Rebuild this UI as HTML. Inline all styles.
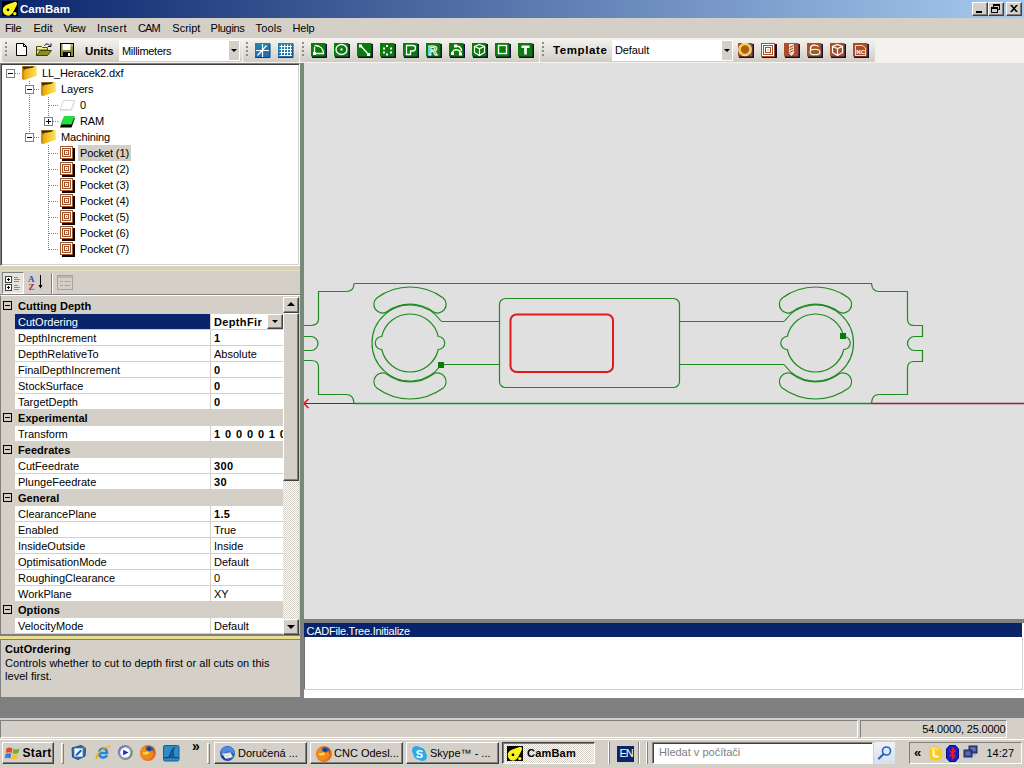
<!DOCTYPE html>
<html><head><meta charset="utf-8"><title>CamBam</title>
<style>
*{box-sizing:border-box;margin:0;padding:0}
html,body{width:1024px;height:768px;overflow:hidden;background:#d4d0c8;font-family:"Liberation Sans",sans-serif;font-size:11px;color:#000}
.a{position:absolute}
.t{position:absolute;white-space:nowrap;line-height:13px}
#title{left:0;top:0;width:1024px;height:18px;background:linear-gradient(90deg,#0a246a 0%,#a6caf0 100%)}
#title .cap{left:20px;top:2px;color:#fff;font-weight:bold;font-size:11.5px;line-height:14px}
.cbtn{position:absolute;top:2px;width:16px;height:14px;background:#d4d0c8;border:1px solid;border-color:#fff #404040 #404040 #fff;box-shadow:inset -1px -1px 0 #808080}
#menu{left:0;top:18px;width:1024px;height:20px;background:#d4d0c8}
#menu .t{top:4px;font-size:11px}
#tb{left:0;top:38px;width:1024px;height:25px;background:#f4f2ee}
.strip{position:absolute;top:0px;height:24px;background:linear-gradient(180deg,#f4f3ef 0%,#e4e1da 50%,#d0ccc2 100%);border-radius:2px}
.grip{position:absolute;top:4px;width:2px;height:14px;background:repeating-linear-gradient(180deg,#908e88 0 2px,transparent 2px 4px)}
.combo{position:absolute;background:#fff;height:21px;top:2px}
.combo .dd{position:absolute;right:1px;top:1px;width:10px;height:19px;background:#d4d0c8}
.combo .dd:after{content:"";position:absolute;left:2px;top:8px;border:3px solid transparent;border-top:3px solid #000;border-bottom:0}
.sep{position:absolute;top:4px;width:2px;height:18px;border-left:1px solid #a0a098;border-right:1px solid #fff}
.pm{width:9px;height:9px;border:1px solid #000;background:transparent}
.pm i{position:absolute;left:1px;top:3px;width:5px;height:1px;background:#000}
.pm b{position:absolute;left:3px;top:1px;width:1px;height:5px;background:#000}
.tpm{position:absolute;width:9px;height:9px;border:1px solid #808080;background:#fff}
.tpm i{position:absolute;left:1px;top:3px;width:5px;height:1px;background:#000}
.tpm b{position:absolute;left:3px;top:1px;width:1px;height:5px;background:#000}
.hd{position:absolute;height:1px;background:repeating-linear-gradient(90deg,#808080 0 1px,transparent 1px 2px)}
.vd{position:absolute;width:1px;background:repeating-linear-gradient(180deg,#808080 0 1px,transparent 1px 2px)}
.sbtn{position:absolute;width:16px;height:16px;background:#d4d0c8;border:1px solid;border-color:#fff #404040 #404040 #fff;box-shadow:inset -1px -1px 0 #808080,inset 1px 1px 0 #d4d0c8}
.tbtn{position:absolute;top:4px;height:22px;background:#d4d0c8;border:1px solid;border-color:#fff #404040 #404040 #fff;box-shadow:inset -1px -1px 0 #808080}
.tbtn .t{top:4px;font-size:11px}
</style></head><body>
<!-- TITLE BAR -->
<div id="title" class="a">
<svg class="a" style="left:2px;top:1px" width="16" height="16" viewBox="0 0 16 16"><rect width="16" height="15" fill="#000"/><path d="M0.800 9 C0.800 6 3 4.500 6 3.300 L12.500 0.900 C14.500 0.400 15.600 2 14.800 4 L11 11.500 C9.500 14 7 15 5 14.500 C2.500 14 0.800 12 0.800 9 Z" fill="#f8f420"/><circle cx="6" cy="8.800" r="1.400" fill="#000"/><circle cx="12.800" cy="12.600" r="1.700" fill="#f8f420"/></svg>
<div class="t cap">CamBam</div>
<div class="cbtn" style="left:972px"><div class="a" style="left:3px;top:8px;width:6px;height:2px;background:#000"></div></div>
<div class="cbtn" style="left:988px"><div class="a" style="left:4px;top:1px;width:7px;height:6px;border:1px solid #000;border-top-width:2px"></div><div class="a" style="left:2px;top:4px;width:7px;height:6px;border:1px solid #000;border-top-width:2px;background:#d4d0c8"></div></div>
<div class="cbtn" style="left:1006px"><svg class="a" style="left:3px;top:2px" width="8" height="7" viewBox="0 0 8 7"><path d="M0 0h2l2 2.3L6 0h2L5 3.5 8 7H6L4 4.7 2 7H0l3-3.5z" fill="#000"/></svg></div>
</div>
<!-- MENU -->
<div id="menu" class="a">
<div class="t" style="left:5px;letter-spacing:-0.4px">File</div><div class="t" style="left:33.5px;letter-spacing:0px">Edit</div><div class="t" style="left:63.5px;letter-spacing:-0.5px">View</div><div class="t" style="left:97px;letter-spacing:0.4px">Insert</div><div class="t" style="left:138px;letter-spacing:-0.9px">CAM</div><div class="t" style="left:172.3px;letter-spacing:0px">Script</div><div class="t" style="left:210.6px;letter-spacing:-0.3px">Plugins</div><div class="t" style="left:255.5px;letter-spacing:0.15px">Tools</div><div class="t" style="left:292.5px;letter-spacing:-0.2px">Help</div>
</div>
<!-- TOOLBAR -->
<div id="tb" class="a">
<div class="strip" style="left:2px;width:240px"></div>
<div class="strip" style="left:243px;width:56px"></div>
<div class="strip" style="left:300px;width:239px"></div>
<div class="strip" style="left:540px;width:335px"></div>
<div class="grip" style="left:5px"></div><div class="grip" style="left:246px"></div><div class="grip" style="left:302px"></div><div class="grip" style="left:542px"></div>
<div class="t" style="left:85px;top:7px;font-weight:bold;font-size:11.500px">Units</div>
<div class="combo" style="left:119px;width:121px"><div class="t" style="left:3px;top:5px;letter-spacing:-0.3px">Millimeters</div><div class="dd"></div></div>
<div class="t" style="left:553px;top:6px;font-weight:bold;font-size:11.500px;letter-spacing:0.6px">Template</div>
<div class="combo" style="left:612px;width:121px"><div class="t" style="left:3px;top:4px;letter-spacing:-0.1px">Default</div><div class="dd"></div></div>
<!--ICONS--><svg class="a" style="left:0;top:-1px" width="1024" height="26" viewBox="0 37 1024 26">
<path d="M16.500 43.500 H23.500 L26.500 46.500 V55.500 H16.500 Z" fill="#fff" stroke="#000"/><path d="M23.500 43.500 V46.500 H26.500" fill="none" stroke="#000"/>
<path d="M36.500 46.500 H41.500 L42.500 47.500 H47.500 V50 H36.500 Z" fill="#f4f088" stroke="#505010"/><path d="M36.500 50 V55.500 H47.500 L51.500 50.500 H40.500 L36.500 55.500" fill="#8c8c20" stroke="#404008"/><path d="M36.500 47 V55.500" stroke="#404008"/><path d="M44.500 45.500 C45.500 43.500 48.500 43.500 49.500 45.500" fill="none" stroke="#000"/><path d="M48 46.500 H51 V43.500" fill="none" stroke="#000"/>
<rect x="60.500" y="43.500" width="13" height="13" fill="#8c8c30" stroke="#000"/><rect x="62.500" y="44" width="8" height="6" fill="#fff"/><rect x="63" y="52" width="8" height="4.500" fill="#000"/><rect x="68" y="53" width="2" height="3" fill="#fff"/><rect x="71.500" y="44.500" width="1" height="2" fill="#fff"/>
<defs><linearGradient id="gb" x1="0" y1="0" x2="0" y2="1"><stop offset="0" stop-color="#1c8aa8"/><stop offset="1" stop-color="#2468b8"/></linearGradient></defs>
<rect x="255" y="43" width="15" height="15" fill="url(#gb)"/><path d="M255 57.500 H270 V43.500" stroke="#183c78" fill="none"/>
<path d="M262.500 44 V57 M256 50.500 H269 M257.500 55.500 L266.500 45.500" stroke="#fff" stroke-width="1.200"/>
<rect x="278" y="43" width="15" height="15" fill="url(#gb)"/><path d="M278 57.500 H293 V43.500" stroke="#183c78" fill="none"/>
<path d="M281.500 44.500 V55.500 M284.500 44.500 V55.500 M287.500 44.500 V55.500 M290.500 44.500 V55.500 M279.500 46.500 H292 M279.500 49.500 H292 M279.500 52.500 H292 M279.500 55.500 H292" stroke="#fff" stroke-width="1"/>
<rect x="312" y="44" width="15" height="14" fill="#10103c"/><rect x="311" y="43" width="14.500" height="13.500" fill="#0c7a0c"/><path d="M314.5 47 V53.5 H323.5 C323.5 48.5 320 45.5 314.5 45.5" stroke="#fff" fill="none" stroke-width="1.300"/><rect x="313" y="52" width="3" height="3" fill="#fff"/>
<rect x="335" y="44" width="15" height="14" fill="#10103c"/><rect x="334" y="43" width="14.500" height="13.500" fill="#0c7a0c"/><ellipse cx="341.5" cy="49.500" rx="5.500" ry="5" stroke="#fff" fill="none" stroke-width="1.300"/><rect x="340.5" y="48.500" width="2" height="2" fill="#fff"/>
<rect x="358" y="44" width="15" height="14" fill="#10103c"/><rect x="357" y="43" width="14.500" height="13.500" fill="#0c7a0c"/><path d="M360.5 45.500 L368.5 54.500" stroke="#fff" fill="none" stroke-width="1.400"/><rect x="359" y="44.500" width="3" height="3" fill="#fff"/><rect x="367" y="53" width="3" height="3" fill="#fff"/>
<rect x="381" y="44" width="15" height="14" fill="#10103c"/><rect x="380" y="43" width="14.500" height="13.500" fill="#0c7a0c"/><rect x="386" y="45" width="2" height="2" fill="#fff"/><rect x="383" y="47.5" width="2" height="2" fill="#fff"/><rect x="390" y="47.5" width="2" height="2" fill="#fff"/><rect x="383" y="51.5" width="2" height="2" fill="#fff"/><rect x="390" y="51.5" width="2" height="2" fill="#fff"/><rect x="386" y="53.5" width="2" height="2" fill="#fff"/>
<rect x="404" y="44" width="15" height="14" fill="#10103c"/><rect x="403" y="43" width="14.500" height="13.500" fill="#0c7a0c"/><path d="M406.5 45.500 H413 Q415.5 45.500 415.5 48 Q415.5 51 412.5 51 H410.5 V54.500 H406.5 Z" stroke="#fff" fill="none" stroke-width="1.300"/>
<rect x="427" y="44" width="15" height="14" fill="#10103c"/><rect x="426" y="43" width="14.500" height="13.500" fill="#0c7a0c"/><text x="428" y="55" font-family="Liberation Sans,sans-serif" font-weight="bold" font-size="13" fill="#0c7a0c" stroke="#fff" stroke-width="1">R</text>
<rect x="450" y="44" width="15" height="14" fill="#10103c"/><rect x="449" y="43" width="14.500" height="13.500" fill="#0c7a0c"/><path d="M452.5 53 C452.5 48.500 460.5 48.500 460.5 54 M455.5 46.500 C459 45.500 461.5 47.500 461.5 51" stroke="#fff" fill="none" stroke-width="1.500"/><rect x="451" y="52" width="3" height="3" fill="#fff"/><rect x="459" y="52.500" width="3" height="3" fill="#fff"/><rect x="454" y="44.500" width="3" height="3" fill="#fff"/>
<rect x="473" y="44" width="15" height="14" fill="#10103c"/><rect x="472" y="43" width="14.500" height="13.500" fill="#0c7a0c"/><path d="M479.5 44.500 L484.5 46.500 V52.500 L479.5 55.500 L474.5 52.500 V46.500 Z M474.5 46.500 L479.5 48.500 L484.5 46.500 M479.5 48.500 V55.500" stroke="#fff" fill="none" stroke-width="1.200"/>
<rect x="496" y="44" width="15" height="14" fill="#10103c"/><rect x="495" y="43" width="14.500" height="13.500" fill="#0c7a0c"/><rect x="498.5" y="45.500" width="8" height="8" stroke="#fff" fill="none" stroke-width="1.400"/>
<rect x="519" y="44" width="15" height="14" fill="#10103c"/><rect x="518" y="43" width="14.500" height="13.500" fill="#0c7a0c"/><path d="M521.5 45.500 H529.5 V48 H526.8 V54.500 H524.2 V48 H521.5 Z" fill="#fff"/>
<rect x="739" y="44" width="15" height="14" fill="#10103c"/><rect x="738" y="43" width="14.500" height="13.500" fill="#a8502c"/><circle cx="745" cy="49.500" r="5" fill="#b05a18" stroke="#f8e020" stroke-width="1.600"/><circle cx="745" cy="49.500" r="6.300" fill="none" stroke="#fff" stroke-width="0.900"/>
<rect x="762" y="44" width="15" height="14" fill="#10103c"/><rect x="761.5" y="43.500" width="13" height="13" fill="#fff" stroke="#a8502c"/><rect x="763.5" y="45.500" width="9" height="9" fill="#fff" stroke="#a8502c"/><rect x="765.5" y="47.500" width="5" height="5" fill="#fff" stroke="#a8502c"/><rect x="767.5" y="49.500" width="1" height="1" fill="#a8502c"/>
<rect x="785" y="44" width="15" height="14" fill="#10103c"/><rect x="784" y="43" width="14.500" height="13.500" fill="#a8502c"/><path d="M789.5 44.500 H793.5 V53 L791.5 55.500 L789.5 53 Z" fill="#e8d8c8" stroke="#fff" stroke-width="0.800"/><path d="M789.5 47.500 L793.5 45.500 M789.5 50 L793.5 48 M789.5 52.500 L793.5 50.500" stroke="#a8502c" stroke-width="1"/>
<rect x="808" y="44" width="15" height="14" fill="#10103c"/><rect x="807" y="43" width="14.500" height="13.500" fill="#a8502c"/><path d="M818.5 46.500 C816 44.500 811 44.500 810.5 48 C810 51 813 51.500 815 51" stroke="#fff" fill="none" stroke-width="1.300"/><ellipse cx="815" cy="52" rx="5" ry="2.800" fill="#8a6a20" stroke="#fff" stroke-width="1.100"/>
<rect x="831" y="44" width="15" height="14" fill="#10103c"/><rect x="830" y="43" width="14.500" height="13.500" fill="#a8502c"/><path d="M837.5 44.500 L842.5 46.500 V52.500 L837.5 55.500 L832.5 52.500 V46.500 Z M832.5 46.500 L837.5 48.500 L842.5 46.500 M837.5 48.500 V55.500" stroke="#fff" fill="none" stroke-width="1.200"/>
<rect x="854" y="44" width="15" height="14" fill="#10103c"/><rect x="853" y="43" width="14.500" height="13.500" fill="#a8502c"/><path d="M855.5 45.500 H862.5 L865.5 48 V55.500 H855.5 Z" fill="#a8502c" stroke="#f0d8c8" stroke-width="1"/><text x="856.3" y="54" font-family="Liberation Sans,sans-serif" font-weight="bold" font-size="6" fill="#fff">NC</text>
</svg>
<!--/ICONS-->
</div>
<!-- TREE -->
<div class="a" style="left:0;top:63px;width:300px;height:203px;background:#fff;border:1px solid;border-color:#808080 #fff #fff #808080;box-shadow:inset 1px 1px 0 #404040,inset -1px -1px 0 #d4d0c8"></div>
<div class="a" style="left:0;top:1px;letter-spacing:-0.12px">
<div class="hd" style="left:15px;top:72px;width:6px"></div>
<div class="vd" style="left:29px;top:80px;width:1px;height:52px"></div>
<div class="hd" style="left:34px;top:88px;width:6px"></div>
<div class="hd" style="left:34px;top:136px;width:6px"></div>
<div class="vd" style="left:48px;top:96px;height:20px"></div>
<div class="vd" style="left:48px;top:144px;height:105px"></div>
<div class="hd" style="left:49px;top:104px;width:10px"></div>
<div class="hd" style="left:53px;top:120px;width:6px"></div>
<div class="hd" style="left:49px;top:152px;width:10px"></div>
<div class="hd" style="left:49px;top:168px;width:10px"></div>
<div class="hd" style="left:49px;top:184px;width:10px"></div>
<div class="hd" style="left:49px;top:200px;width:10px"></div>
<div class="hd" style="left:49px;top:216px;width:10px"></div>
<div class="hd" style="left:49px;top:232px;width:10px"></div>
<div class="hd" style="left:49px;top:248px;width:10px"></div>
<div class="tpm" style="left:6px;top:68px"><i></i></div>
<div class="tpm" style="left:25px;top:84px"><i></i></div>
<div class="tpm" style="left:44px;top:116px"><i></i><b></b></div>
<div class="tpm" style="left:25px;top:132px"><i></i></div>
<svg class="a" style="left:21px;top:64px" width="17" height="16" viewBox="0 0 17 16"><defs><linearGradient id="fg" x1="0" y1="0" x2="1" y2="0"><stop offset="0" stop-color="#e09a10"/><stop offset="0.5" stop-color="#f6c628"/><stop offset="1" stop-color="#fbe060"/></linearGradient></defs><path d="M1 1.200 L15.500 1 L15.800 10.800 L2.800 15.300 L1 13.500 Z" fill="url(#fg)"/><path d="M1.300 1.400 L13.500 1.300 L11.500 2.800 L3.800 4 L2.600 6.500 Z" fill="#3a2808"/><path d="M1 1.200 L2.800 4.500 L2.800 15.300 L1 13.500 Z" fill="#c88a10"/></svg>
<div class="t" style="left:42px;top:66px">LL_Heracek2.dxf</div>
<svg class="a" style="left:40px;top:80px" width="17" height="16" viewBox="0 0 17 16"><defs><linearGradient id="fg" x1="0" y1="0" x2="1" y2="0"><stop offset="0" stop-color="#e09a10"/><stop offset="0.5" stop-color="#f6c628"/><stop offset="1" stop-color="#fbe060"/></linearGradient></defs><path d="M1 1.200 L15.500 1 L15.800 10.800 L2.800 15.300 L1 13.500 Z" fill="url(#fg)"/><path d="M1.300 1.400 L13.500 1.300 L11.500 2.800 L3.800 4 L2.600 6.500 Z" fill="#3a2808"/><path d="M1 1.200 L2.800 4.500 L2.800 15.300 L1 13.500 Z" fill="#c88a10"/></svg>
<div class="t" style="left:61px;top:82px">Layers</div>
<svg class="a" style="left:59px;top:98px" width="17" height="13" viewBox="0 0 17 13"><path d="M4.5 1.5 L15.5 1.5 L12 10.5 L1 10.5 Z" fill="#fff" stroke="#d8d8d8"/><path d="M1 11.5 L12.5 11.5 L16 2.5" stroke="#e4e4e4" fill="none"/></svg>
<div class="t" style="left:80px;top:98px">0</div>
<svg class="a" style="left:59px;top:114px" width="17" height="14" viewBox="0 0 17 14"><path d="M1 12.5 L4.5 3 L16 3 L12.5 12.5 Z" fill="#000"/><path d="M5 1 L16 1 L12.5 9.5 L1.5 9.5 Z" fill="#22e03c"/></svg>
<div class="t" style="left:80px;top:114px">RAM</div>
<svg class="a" style="left:40px;top:128px" width="17" height="16" viewBox="0 0 17 16"><defs><linearGradient id="fg" x1="0" y1="0" x2="1" y2="0"><stop offset="0" stop-color="#e09a10"/><stop offset="0.5" stop-color="#f6c628"/><stop offset="1" stop-color="#fbe060"/></linearGradient></defs><path d="M1 1.200 L15.500 1 L15.800 10.800 L2.800 15.300 L1 13.500 Z" fill="url(#fg)"/><path d="M1.300 1.400 L13.500 1.300 L11.500 2.800 L3.800 4 L2.600 6.500 Z" fill="#3a2808"/><path d="M1 1.200 L2.800 4.500 L2.800 15.300 L1 13.500 Z" fill="#c88a10"/></svg>
<div class="t" style="left:61px;top:130px">Machining</div>
<div class="a" style="left:78px;top:144px;width:53px;height:16px;background:#d4d0c8"></div>
<svg class="a" style="left:60px;top:145px" width="15" height="15" viewBox="0 0 15 15"><rect x="2" y="2" width="13" height="13" fill="#000"/><rect x="0.5" y="0.5" width="12" height="12" fill="#fff" stroke="#a0522d"/><rect x="2.5" y="2.5" width="8" height="8" fill="#fbe9d8" stroke="#a0522d"/><rect x="4.5" y="4.5" width="4" height="4" fill="#fff" stroke="#a0522d"/><rect x="6" y="6" width="1" height="1" fill="#a0522d"/></svg>
<div class="t" style="left:80px;top:146px">Pocket (1)</div>
<svg class="a" style="left:60px;top:161px" width="15" height="15" viewBox="0 0 15 15"><rect x="2" y="2" width="13" height="13" fill="#000"/><rect x="0.5" y="0.5" width="12" height="12" fill="#fff" stroke="#a0522d"/><rect x="2.5" y="2.5" width="8" height="8" fill="#fbe9d8" stroke="#a0522d"/><rect x="4.5" y="4.5" width="4" height="4" fill="#fff" stroke="#a0522d"/><rect x="6" y="6" width="1" height="1" fill="#a0522d"/></svg>
<div class="t" style="left:80px;top:162px">Pocket (2)</div>
<svg class="a" style="left:60px;top:177px" width="15" height="15" viewBox="0 0 15 15"><rect x="2" y="2" width="13" height="13" fill="#000"/><rect x="0.5" y="0.5" width="12" height="12" fill="#fff" stroke="#a0522d"/><rect x="2.5" y="2.5" width="8" height="8" fill="#fbe9d8" stroke="#a0522d"/><rect x="4.5" y="4.5" width="4" height="4" fill="#fff" stroke="#a0522d"/><rect x="6" y="6" width="1" height="1" fill="#a0522d"/></svg>
<div class="t" style="left:80px;top:178px">Pocket (3)</div>
<svg class="a" style="left:60px;top:193px" width="15" height="15" viewBox="0 0 15 15"><rect x="2" y="2" width="13" height="13" fill="#000"/><rect x="0.5" y="0.5" width="12" height="12" fill="#fff" stroke="#a0522d"/><rect x="2.5" y="2.5" width="8" height="8" fill="#fbe9d8" stroke="#a0522d"/><rect x="4.5" y="4.5" width="4" height="4" fill="#fff" stroke="#a0522d"/><rect x="6" y="6" width="1" height="1" fill="#a0522d"/></svg>
<div class="t" style="left:80px;top:194px">Pocket (4)</div>
<svg class="a" style="left:60px;top:209px" width="15" height="15" viewBox="0 0 15 15"><rect x="2" y="2" width="13" height="13" fill="#000"/><rect x="0.5" y="0.5" width="12" height="12" fill="#fff" stroke="#a0522d"/><rect x="2.5" y="2.5" width="8" height="8" fill="#fbe9d8" stroke="#a0522d"/><rect x="4.5" y="4.5" width="4" height="4" fill="#fff" stroke="#a0522d"/><rect x="6" y="6" width="1" height="1" fill="#a0522d"/></svg>
<div class="t" style="left:80px;top:210px">Pocket (5)</div>
<svg class="a" style="left:60px;top:225px" width="15" height="15" viewBox="0 0 15 15"><rect x="2" y="2" width="13" height="13" fill="#000"/><rect x="0.5" y="0.5" width="12" height="12" fill="#fff" stroke="#a0522d"/><rect x="2.5" y="2.5" width="8" height="8" fill="#fbe9d8" stroke="#a0522d"/><rect x="4.5" y="4.5" width="4" height="4" fill="#fff" stroke="#a0522d"/><rect x="6" y="6" width="1" height="1" fill="#a0522d"/></svg>
<div class="t" style="left:80px;top:226px">Pocket (6)</div>
<svg class="a" style="left:60px;top:241px" width="15" height="15" viewBox="0 0 15 15"><rect x="2" y="2" width="13" height="13" fill="#000"/><rect x="0.5" y="0.5" width="12" height="12" fill="#fff" stroke="#a0522d"/><rect x="2.5" y="2.5" width="8" height="8" fill="#fbe9d8" stroke="#a0522d"/><rect x="4.5" y="4.5" width="4" height="4" fill="#fff" stroke="#a0522d"/><rect x="6" y="6" width="1" height="1" fill="#a0522d"/></svg>
<div class="t" style="left:80px;top:242px">Pocket (7)</div>
</div>
<div class="a" style="left:0;top:270px;width:300px;height:1px;background:#e6e0b0"></div>
<div class="a" style="left:2px;top:272px;width:22px;height:22px;background:#e6e4de;border:1px solid;border-color:#808080 #fff #fff #808080"></div>
<svg class="a" style="left:5px;top:275px" width="16" height="16" viewBox="0 0 16 16"><g fill="#fff" stroke="#404040"><rect x="0.5" y="1.5" width="6" height="6"/><rect x="0.5" y="9.5" width="6" height="6"/></g><path d="M2 4.5h3M3.5 3v3M2 12.5h3M3.5 11v3" stroke="#000"/><path d="M9 2.5h4M9 4.5h6M9 6.5h5M9 10.5h4M9 12.5h6M9 14.5h5" stroke="#8088a0"/></svg>
<svg class="a" style="left:28px;top:274px" width="16" height="17" viewBox="0 0 16 17"><text x="0" y="7.5" font-family="Liberation Serif,serif" font-size="9" font-weight="bold" fill="#2a4ab8">A</text><text x="0.5" y="15.5" font-family="Liberation Serif,serif" font-size="9" font-weight="bold" fill="#b02838">Z</text><path d="M12.5 1v12" stroke="#000"/><path d="M10.5 11h4l-2 3.5z" fill="#000"/></svg>
<div class="a" style="left:51px;top:273px;width:2px;height:21px;border-left:1px solid #808080;border-right:1px solid #fff"></div>
<svg class="a" style="left:57px;top:275px" width="16" height="15" viewBox="0 0 16 15"><rect x="0.5" y="0.5" width="15" height="14" fill="#d4d0c8" stroke="#a8a49c"/><rect x="1" y="1" width="14" height="2" fill="#b8b4ac"/><path d="M3 6.5h3M3 10.5h3M7.500 6.500h6M7.500 10.500h6" stroke="#a8a49c"/><path d="M1.5 14.500h14v-13" stroke="#fff" fill="none" transform="translate(1,1)"/></svg>
<div class="a" style="left:0;top:294px;width:300px;height:1px;background:#808080"></div>
<div class="a" id="pg" style="left:0;top:295px;width:300px;height:340px;background:#d4d0c8;border-left:1px solid #808080;border-bottom:1px solid #808080;border-top:1px solid #fff"></div>
<div class="a" style="left:15px;top:297px;width:268px;height:337px;background:#fff"></div>
<div class="a" style="left:1px;top:297px;width:282px;height:17px;background:#d4d0c8"></div>
<div class="a pm" style="left:3px;top:301px"><i></i></div>
<div class="t" style="left:18px;top:300px;font-weight:bold;letter-spacing:0.05px">Cutting Depth</div>
<div class="a" style="left:15px;top:314px;width:195px;height:15px;background:#0a246a"></div>
<div class="t" style="left:18px;top:316px;color:#fff">CutOrdering</div>
<div class="t" style="left:214px;top:316px;font-weight:bold;letter-spacing:0.35px;width:52px;overflow:hidden">DepthFir</div>
<div class="a" style="left:15px;top:329px;width:268px;height:1px;background:#d4d0c8"></div>
<div class="a" style="left:210px;top:314px;width:1px;height:15px;background:#d4d0c8"></div>
<div class="t" style="left:18px;top:332px">DepthIncrement</div>
<div class="t" style="left:214px;top:332px;font-weight:bold;letter-spacing:0.35px;width:69px;overflow:hidden">1</div>
<div class="a" style="left:15px;top:345px;width:268px;height:1px;background:#d4d0c8"></div>
<div class="a" style="left:210px;top:330px;width:1px;height:15px;background:#d4d0c8"></div>
<div class="t" style="left:18px;top:348px">DepthRelativeTo</div>
<div class="t" style="left:214px;top:348px;width:69px;overflow:hidden">Absolute</div>
<div class="a" style="left:15px;top:361px;width:268px;height:1px;background:#d4d0c8"></div>
<div class="a" style="left:210px;top:346px;width:1px;height:15px;background:#d4d0c8"></div>
<div class="t" style="left:18px;top:364px">FinalDepthIncrement</div>
<div class="t" style="left:214px;top:364px;font-weight:bold;letter-spacing:0.35px;width:69px;overflow:hidden">0</div>
<div class="a" style="left:15px;top:377px;width:268px;height:1px;background:#d4d0c8"></div>
<div class="a" style="left:210px;top:362px;width:1px;height:15px;background:#d4d0c8"></div>
<div class="t" style="left:18px;top:380px">StockSurface</div>
<div class="t" style="left:214px;top:380px;font-weight:bold;letter-spacing:0.35px;width:69px;overflow:hidden">0</div>
<div class="a" style="left:15px;top:393px;width:268px;height:1px;background:#d4d0c8"></div>
<div class="a" style="left:210px;top:378px;width:1px;height:15px;background:#d4d0c8"></div>
<div class="t" style="left:18px;top:396px">TargetDepth</div>
<div class="t" style="left:214px;top:396px;font-weight:bold;letter-spacing:0.35px;width:69px;overflow:hidden">0</div>
<div class="a" style="left:15px;top:409px;width:268px;height:1px;background:#d4d0c8"></div>
<div class="a" style="left:210px;top:394px;width:1px;height:15px;background:#d4d0c8"></div>
<div class="a" style="left:1px;top:409px;width:282px;height:17px;background:#d4d0c8"></div>
<div class="a pm" style="left:3px;top:413px"><i></i></div>
<div class="t" style="left:18px;top:412px;font-weight:bold;letter-spacing:0.05px">Experimental</div>
<div class="t" style="left:18px;top:428px">Transform</div>
<div class="t" style="left:214px;top:428px;font-weight:bold;letter-spacing:0.9px;width:69px;overflow:hidden">1 0 0 0 0 1 0 0 0 0 1 0 0 0 0 1</div>
<div class="a" style="left:15px;top:441px;width:268px;height:1px;background:#d4d0c8"></div>
<div class="a" style="left:210px;top:426px;width:1px;height:15px;background:#d4d0c8"></div>
<div class="a" style="left:1px;top:441px;width:282px;height:17px;background:#d4d0c8"></div>
<div class="a pm" style="left:3px;top:445px"><i></i></div>
<div class="t" style="left:18px;top:444px;font-weight:bold;letter-spacing:0.05px">Feedrates</div>
<div class="t" style="left:18px;top:460px">CutFeedrate</div>
<div class="t" style="left:214px;top:460px;font-weight:bold;letter-spacing:0.35px;width:69px;overflow:hidden">300</div>
<div class="a" style="left:15px;top:473px;width:268px;height:1px;background:#d4d0c8"></div>
<div class="a" style="left:210px;top:458px;width:1px;height:15px;background:#d4d0c8"></div>
<div class="t" style="left:18px;top:476px">PlungeFeedrate</div>
<div class="t" style="left:214px;top:476px;font-weight:bold;letter-spacing:0.35px;width:69px;overflow:hidden">30</div>
<div class="a" style="left:15px;top:489px;width:268px;height:1px;background:#d4d0c8"></div>
<div class="a" style="left:210px;top:474px;width:1px;height:15px;background:#d4d0c8"></div>
<div class="a" style="left:1px;top:489px;width:282px;height:17px;background:#d4d0c8"></div>
<div class="a pm" style="left:3px;top:493px"><i></i></div>
<div class="t" style="left:18px;top:492px;font-weight:bold;letter-spacing:0.05px">General</div>
<div class="t" style="left:18px;top:508px">ClearancePlane</div>
<div class="t" style="left:214px;top:508px;font-weight:bold;letter-spacing:0.35px;width:69px;overflow:hidden">1.5</div>
<div class="a" style="left:15px;top:521px;width:268px;height:1px;background:#d4d0c8"></div>
<div class="a" style="left:210px;top:506px;width:1px;height:15px;background:#d4d0c8"></div>
<div class="t" style="left:18px;top:524px">Enabled</div>
<div class="t" style="left:214px;top:524px;width:69px;overflow:hidden">True</div>
<div class="a" style="left:15px;top:537px;width:268px;height:1px;background:#d4d0c8"></div>
<div class="a" style="left:210px;top:522px;width:1px;height:15px;background:#d4d0c8"></div>
<div class="t" style="left:18px;top:540px">InsideOutside</div>
<div class="t" style="left:214px;top:540px;width:69px;overflow:hidden">Inside</div>
<div class="a" style="left:15px;top:553px;width:268px;height:1px;background:#d4d0c8"></div>
<div class="a" style="left:210px;top:538px;width:1px;height:15px;background:#d4d0c8"></div>
<div class="t" style="left:18px;top:556px">OptimisationMode</div>
<div class="t" style="left:214px;top:556px;width:69px;overflow:hidden">Default</div>
<div class="a" style="left:15px;top:569px;width:268px;height:1px;background:#d4d0c8"></div>
<div class="a" style="left:210px;top:554px;width:1px;height:15px;background:#d4d0c8"></div>
<div class="t" style="left:18px;top:572px">RoughingClearance</div>
<div class="t" style="left:214px;top:572px;width:69px;overflow:hidden">0</div>
<div class="a" style="left:15px;top:585px;width:268px;height:1px;background:#d4d0c8"></div>
<div class="a" style="left:210px;top:570px;width:1px;height:15px;background:#d4d0c8"></div>
<div class="t" style="left:18px;top:588px">WorkPlane</div>
<div class="t" style="left:214px;top:588px;width:69px;overflow:hidden">XY</div>
<div class="a" style="left:15px;top:601px;width:268px;height:1px;background:#d4d0c8"></div>
<div class="a" style="left:210px;top:586px;width:1px;height:15px;background:#d4d0c8"></div>
<div class="a" style="left:1px;top:601px;width:282px;height:17px;background:#d4d0c8"></div>
<div class="a pm" style="left:3px;top:605px"><i></i></div>
<div class="t" style="left:18px;top:604px;font-weight:bold;letter-spacing:0.05px">Options</div>
<div class="t" style="left:18px;top:620px">VelocityMode</div>
<div class="t" style="left:214px;top:620px;width:69px;overflow:hidden">Default</div>
<div class="a" style="left:15px;top:633px;width:268px;height:1px;background:#d4d0c8"></div>
<div class="a" style="left:210px;top:618px;width:1px;height:15px;background:#d4d0c8"></div>
<!-- dropdown button in selected row -->
<div class="sbtn" style="left:267px;top:314px;height:15px"><div class="a" style="left:4px;top:5px;border:3px solid transparent;border-top:3px solid #000;border-bottom:0"></div></div>
<!-- scrollbar -->
<div class="a" style="left:283px;top:297px;width:16px;height:338px;background:repeating-conic-gradient(#fff 0 25%,#d4d0c8 0 50%) 0 0/2px 2px"></div>
<div class="sbtn" style="left:283px;top:297px"><div class="a" style="left:3px;top:4px;border:4px solid transparent;border-bottom:4px solid #000;border-top:0"></div></div>
<div class="sbtn" style="left:283px;top:313px;height:168px"></div>
<div class="sbtn" style="left:283px;top:619px"><div class="a" style="left:3px;top:5px;border:4px solid transparent;border-top:4px solid #000;border-bottom:0"></div></div>
<!-- description -->
<div class="a" style="left:0;top:635px;width:300px;height:1px;background:#808080"></div>
<div class="a" style="left:0;top:636px;width:300px;height:3px;background:#e8e090"></div>
<div class="a" style="left:0;top:639px;width:300px;height:58px;background:#d4d0c8;border:1px solid #808080;border-right:0;border-bottom:0"></div>
<div class="t" style="left:5px;top:643px;font-weight:bold;letter-spacing:0.1px">CutOrdering</div>
<div class="t" style="left:5px;top:657px;font-size:11px;line-height:13px;white-space:normal;width:285px;letter-spacing:0.04px">Controls whether to cut to depth first or all cuts on this level first.</div>
<!-- SPLITTER + CANVAS -->
<div class="a" style="left:300px;top:619px;width:4px;height:78px;background:#808080"></div>
<div class="a" style="left:300px;top:63px;width:4px;height:556px;background:#748c76"></div>
<svg class="a" style="left:304px;top:63px" width="720" height="556" viewBox="304 63 720 556">
<rect x="304" y="63" width="720" height="556" fill="#e0e0e0"/>
<g fill="none" stroke="#1f8a1f" stroke-width="1.2">
<!-- outline -->
<path d="M354 283.500 H871.500 Q872 291.500 879 291.500 H907.500 V319 Q907.500 325.500 914 325.500 H922.500 V336.500 H914.500 A7 7 0 0 0 914.500 350.500 H922.500 V361.500 H914 Q907.500 361.500 907.500 368 V394.500 H879 Q872 394.500 871.500 403 "/>
<path d="M354 283.500 Q354 291.500 346 291.500 H318.500 V319 Q318.500 325 311 325.500 H304"/>
<path d="M304 336.500 H311 A7 7 0 0 1 311 350.500 H304"/>
<path d="M304 360.500 H311 Q318.500 360.500 318.500 367 V394.500 H346 Q353.500 394.500 354 403"/>
<!-- center rect -->
<rect x="499.500" y="298.500" width="180" height="89" rx="6"/>
<!-- left circle -->
<path d="M441 321 A38 38 0 1 0 441 365"/>
<path d="M441 321.500 H499.500 M444 364.500 H499.500"/>
<path d="M381.74 336.5 A29 29 0 0 1 438.26 336.5 A6.5 6.5 0 0 1 438.26 349.5 A29 29 0 0 1 381.74 349.5 A6.5 6.5 0 0 1 381.74 336.5 Z"/>
<path d="M377.1 297.7 A56 56 0 0 1 442.9 297.7 A8.6 8.6 0 0 1 432.8 311.6 A38.8 38.8 0 0 0 387.2 311.6 A8.6 8.6 0 0 1 377.1 297.7 Z"/>
<path d="M377.1 388.3 A56 56 0 0 0 442.9 388.3 A8.6 8.6 0 0 0 432.8 374.4 A38.8 38.8 0 0 1 387.2 374.4 A8.6 8.6 0 0 0 377.1 388.3 Z"/>
<!-- right circle -->
<path d="M784.500 321 A38 38 0 1 1 784.500 365"/>
<path d="M787.24 336.5 A29 29 0 0 1 843.76 336.5 A6.5 6.5 0 0 1 843.76 349.5 A29 29 0 0 1 787.24 349.5 A6.5 6.5 0 0 1 787.24 336.5 Z"/>
<path d="M782.6 297.7 A56 56 0 0 1 848.4 297.7 A8.6 8.6 0 0 1 838.3 311.6 A38.8 38.8 0 0 0 792.7 311.6 A8.6 8.6 0 0 1 782.6 297.7 Z"/>
<path d="M782.6 388.3 A56 56 0 0 0 848.4 388.3 A8.6 8.6 0 0 0 838.3 374.4 A38.8 38.8 0 0 1 792.7 374.4 A8.6 8.6 0 0 0 782.6 388.3 Z"/>
<path d="M679.500 321.500 H784.500 M679.500 364.500 H784.500"/>
</g>
<path d="M304 403.500 H354" stroke="#8a1830" stroke-width="1.200"/>
<path d="M308.500 399 L304 403.500 L308.500 408" stroke="#e01828" stroke-width="1.600" fill="none"/>
<path d="M354 403.500 H872" stroke="#1f8a1f" stroke-width="1.4"/>
<path d="M872 403.500 H1024" stroke="#a01838" stroke-width="1.4"/>
<rect x="510.500" y="314.500" width="102.500" height="57.500" rx="6" fill="none" stroke="#e01818" stroke-width="2"/>
<rect x="438" y="362" width="6" height="6" fill="#0a7a0a"/>
<rect x="840" y="333" width="6" height="6" fill="#0a7a0a"/>
</svg>
<div class="a" style="left:304px;top:619px;width:720px;height:4px;background:#808080"></div>
<!-- LOG -->
<div id="log" class="a" style="left:304px;top:623px;width:720px;height:75px;background:#fff;z-index:2"></div>
<div class="a" style="left:304px;top:623px;width:718px;height:14px;background:#0a246a;z-index:3"></div>
<div class="t" style="left:306.500px;top:625px;color:#fff;letter-spacing:-0.24px;z-index:4">CADFile.Tree.Initialize</div>
<div class="a" style="left:304px;top:637px;width:1px;height:52px;background:#707070;z-index:3"></div>
<div class="a" style="left:304px;top:689px;width:719px;height:1px;background:#d0d0d0;z-index:3"></div>
<div class="a" style="left:1022px;top:637px;width:1px;height:53px;background:#d0d0d0;z-index:3"></div>
<div class="a" style="left:0;top:697px;width:1024px;height:21px;background:#808080"></div>
<!-- STATUS -->
<div id="status" class="a" style="left:0;top:718px;width:1024px;height:21px;background:#d4d0c8"></div>
<div class="a" style="left:0px;top:720px;width:858px;height:18px;border:1px solid;border-color:#808080 #fff #fff #808080"></div>
<div class="a" style="left:860px;top:720px;width:147px;height:18px;border:1px solid;border-color:#808080 #fff #fff #808080"></div>
<div class="t" style="left:859px;top:723px;width:146.500px;text-align:right;font-size:11px;letter-spacing:-0.15px">54.0000, 25.0000</div>
<!-- TASKBAR -->
<div id="taskbar" class="a" style="left:0;top:739px;width:1024px;height:29px;background:#d4d0c8;border-top:1px solid #fff"><div class="a" style="left:0;top:-2px">
<div class="tbtn" style="left:2px;width:52px"><svg class="a" style="left:2px;top:2px" width="16" height="16" viewBox="0 0 16 16"><path d="M1.500 3.500 C3.500 2 5.500 2.500 7.500 3.500 L6.500 8 C4.500 7 2.500 7 0.800 8 Z" fill="#e8452c"/><path d="M8.500 3.800 C10.500 5 12.500 4.500 14.500 3.500 L13.500 8 C11.500 9 9.500 9 7.500 8.200 Z" fill="#6cb52d"/><path d="M0.600 9 C2.500 8 4.500 8 6.300 9 L5.300 13.500 C3.500 12.500 1.500 12.500 -0.200 13.500 Z" fill="#3a7cd8"/><path d="M7.300 9.300 C9.300 10.200 11.300 10 13.300 9 L12.300 13.500 C10.300 14.500 8.300 14.500 6.300 13.700 Z" fill="#f6c12a"/></svg><div class="t" style="left:19.500px;top:3px;font-weight:bold;font-size:12px;line-height:14px;letter-spacing:0.35px">Start</div></div>
<div class="a" style="left:61px;top:5px;width:3px;height:21px;border-left:1px solid #fff;border-right:1px solid #808080;border-top:1px solid #fff;border-bottom:1px solid #808080"></div>
<div id="ql">
<svg class="a" style="left:70px;top:6px" width="17" height="17" viewBox="0 0 17 17"><path d="M2 4 L11 1.500 L15.500 4 L15 12 L8 15.500 L2.500 13 Z" fill="#2a6fb8" stroke="#1a4c8c"/><path d="M4.500 4.500 H12.500 V12.500 H4.500 Z" fill="#eef6ff" stroke="#9cc4ec"/><path d="M6 10 L10.500 5.500 L12 7 L7.500 11.500 L5.500 12 Z" fill="#3b5a82"/><path d="M13 3 L15.500 5" stroke="#c86428" stroke-width="1.500"/></svg>
<svg class="a" style="left:94px;top:6px" width="18" height="17" viewBox="0 0 18 17"><path d="M5.500 9 H13 C13 6 11.500 4.500 9.300 4.500 C7 4.500 5.300 6.300 5.300 9 C5.300 11.800 7 13.500 9.300 13.500 C11 13.500 12.300 12.800 12.900 11.300" fill="none" stroke="#2488dc" stroke-width="2.600"/><path d="M1.800 15 C0 12 5.500 5 15.800 1.300 C17 1.500 16.500 3.500 15 4.500 C15.500 3 14.500 2.800 13 3.500 C6.500 7 3 11.500 3.500 14.500 C3 15.500 2.300 15.500 1.800 15 Z" fill="#f0b020"/></svg>
<svg class="a" style="left:117px;top:6px" width="17" height="17" viewBox="0 0 17 17"><defs><linearGradient id="wm" x1="0" y1="0" x2="1" y2="1"><stop offset="0" stop-color="#5a64c8"/><stop offset=".5" stop-color="#8a98c0"/><stop offset="1" stop-color="#5c8a3c"/></linearGradient></defs><circle cx="8.300" cy="8.500" r="7.500" fill="url(#wm)"/><circle cx="8.300" cy="8.500" r="5.200" fill="#e8ecf8"/><circle cx="8.300" cy="8.500" r="4" fill="#fff"/><path d="M6.200 5.800 L11.600 8.500 L6.200 11.200 Z" fill="#1c2cb0"/></svg>
<svg class="a" style="left:139px;top:6px" width="18" height="18" viewBox="0 0 18 18"><circle cx="9" cy="9" r="8" fill="#e8701c"/><circle cx="10" cy="7" r="4.800" fill="#2a58a8"/><path d="M1.500 7 C3 3 6 2 8 2.500 C6 4 6.500 6 8.500 7 C10.500 8 12.500 7 13.500 6 C15 9 14 14 9 15.500 C4 16.500 0.500 12 1.500 7 Z" fill="#f08a1c"/><path d="M4 10 C6 11 9 10.500 10.500 9 L8.500 7 C7 8.500 5 8.500 3.500 8 Z" fill="#fbd44c"/><path d="M9.500 3 L11.500 4.500 L10.500 6.500 L9 5.500 Z" fill="#1a2a5c"/></svg>
<svg class="a" style="left:163px;top:7px" width="17" height="17" viewBox="0 0 17 17"><rect x="0.500" y="0.500" width="15.500" height="15.500" rx="1.500" fill="#2f8cc8" stroke="#1c5e94"/><path d="M2 12.500 H5 C7 12.500 7.500 3.500 11.500 2.500 C9.500 6 10 12.500 12.500 12.500 H15" fill="#1c5e94" stroke="#104068" stroke-width="0.800"/><path d="M1 12.800 H16" stroke="#104068" stroke-width="0.800"/></svg>
</div>
<div class="t" style="left:192px;top:1px;font-weight:bold;font-size:14px;line-height:14px">»</div>
<div class="a" style="left:207px;top:5px;width:3px;height:21px;border-left:1px solid #fff;border-right:1px solid #808080;border-top:1px solid #fff;border-bottom:1px solid #808080"></div>
<div class="tbtn" style="left:214px;width:93px"><svg class="a" style="left:4px;top:2px" width="17" height="17" viewBox="0 0 17 17"><circle cx="8.500" cy="8.500" r="7.500" fill="#2a5cb0"/><path d="M3 3.500 C6 1 11 1 14 4 C15.500 6 15.500 8 15 9.500 C13.500 7 11 6 8 6.500 C5.500 7 4 9 4 11 C2.500 9 1.500 6 3 3.500 Z" fill="#4c8ce0"/><path d="M3 9 L11.500 7.500 L13.500 12 L5.500 14 Z" fill="#f4f4f4" stroke="#b8c0d0" stroke-width="0.600"/><path d="M3 9 L8.500 11.500 L11.500 7.500" fill="none" stroke="#a8b0c0" stroke-width="0.700"/><path d="M1.500 10.500 C3 13.500 6 15.500 10 15.500 C7 14.500 5 12.500 4.500 10.500 Z" fill="#183c84"/></svg><div class="t" style="left:23px">Doručená ...</div></div>
<div class="tbtn" style="left:310px;width:93px"><svg class="a" style="left:4px;top:2px" width="18" height="18" viewBox="0 0 18 18"><circle cx="9" cy="9" r="8" fill="#e8701c"/><circle cx="10" cy="7" r="4.800" fill="#2a58a8"/><path d="M1.500 7 C3 3 6 2 8 2.500 C6 4 6.500 6 8.500 7 C10.500 8 12.500 7 13.500 6 C15 9 14 14 9 15.500 C4 16.500 0.500 12 1.500 7 Z" fill="#f08a1c"/><path d="M4 10 C6 11 9 10.500 10.500 9 L8.500 7 C7 8.500 5 8.500 3.500 8 Z" fill="#fbd44c"/><path d="M9.500 3 L11.500 4.500 L10.500 6.500 L9 5.500 Z" fill="#1a2a5c"/></svg><div class="t" style="left:23px">CNC Odesl...</div></div>
<div class="tbtn" style="left:406px;width:93px"><svg class="a" style="left:4px;top:2px" width="17" height="17" viewBox="0 0 17 17"><circle cx="5.500" cy="5.500" r="4.500" fill="#2ea8e8"/><circle cx="11.500" cy="11.500" r="4.500" fill="#2ea8e8"/><circle cx="8.500" cy="8.500" r="6.300" fill="#2ea8e8"/><text x="8.500" y="12.500" font-family="Liberation Sans,sans-serif" font-size="11" font-weight="bold" fill="#fff" text-anchor="middle">S</text></svg><div class="t" style="left:23px">Skype™ - ...</div></div>
<div class="tbtn" style="left:502px;width:93px;border-color:#404040 #fff #fff #404040;box-shadow:inset 1px 1px 0 #808080;background:repeating-conic-gradient(#fff 0 25%,#d4d0c8 0 50%) 0 0/2px 2px"><svg class="a" style="left:4px;top:3px" width="16" height="16" viewBox="0 0 16 16"><rect width="16" height="15" fill="#000"/><path d="M0.800 9 C0.800 6 3 4.500 6 3.300 L12.500 0.900 C14.500 0.400 15.600 2 14.800 4 L11 11.500 C9.500 14 7 15 5 14.500 C2.500 14 0.800 12 0.800 9 Z" fill="#f8f420"/><circle cx="6" cy="8.800" r="1.400" fill="#000"/><circle cx="12.800" cy="12.600" r="1.700" fill="#f8f420"/></svg><div class="t" style="left:24px;top:4px;font-weight:bold;letter-spacing:0.2px">CamBam</div></div>
<div class="a" style="left:608px;top:4px;width:2px;height:22px;border-left:1px solid #fff;border-right:1px solid #808080"></div>
<div class="a" style="left:617px;top:8px;width:17px;height:16px;background:#0a246a"></div><div class="t" style="left:619.500px;top:9px;color:#fff;font-size:11px;letter-spacing:-1px">EN</div>
<div class="a" style="left:638px;top:4px;width:2px;height:22px;border-left:1px solid #808080;border-right:1px solid #fff"></div>
<div class="a" style="left:646px;top:4px;width:2px;height:22px;border-left:1px solid #fff;border-right:1px solid #808080"></div>
<div class="a" style="left:652px;top:4px;width:221px;height:22px;background:#fff;border:1px solid;border-color:#808080 #fff #fff #808080;box-shadow:inset 1px 1px 0 #404040"></div>
<div class="t" style="left:659px;top:8px;color:#808080;font-size:11px">Hledat v počítači</div>
<div class="a" style="left:874px;top:4px;width:21px;height:22px;background:linear-gradient(180deg,#eef2f8,#d8dfea);"></div>
<svg class="a" style="left:877px;top:7px" width="16" height="16" viewBox="0 0 16 16"><circle cx="9.500" cy="6" r="4" fill="#d8ecff" stroke="#2a62b8" stroke-width="1.6"/><path d="M6.500 9 L2 13.500" stroke="#2a62b8" stroke-width="2.200" stroke-linecap="round"/></svg>
<div class="a" style="left:909px;top:4px;width:113px;height:22px;border:1px solid;border-color:#808080 #fff #fff #808080"></div>
<div class="t" style="left:914px;top:8px;font-weight:bold;font-size:13px;line-height:14px">«</div>
<svg class="a" style="left:927px;top:7px" width="17" height="17" viewBox="0 0 17 17"><path d="M2 5 C2 2 5 0.500 8 1.500 C12 1 15.500 4 15 8.500 C16 12 13 16 9 15.500 C5 16.500 1.500 13 2.500 9.500 Z" fill="#f8cc18"/><path d="M4 4 C6 2.500 10 3 11 5" stroke="#fde878" stroke-width="1.500" fill="none"/><path d="M6.500 4.500 V9.500 Q6.500 11.500 9 11.500 H11.500" stroke="#fff" stroke-width="2" fill="none"/></svg>
<svg class="a" style="left:946px;top:7px" width="13" height="17" viewBox="0 0 13 17"><path d="M3.500 0.500 H9.500 L12.500 4 V13 L9.500 16.500 H3.500 L0.500 13 V4 Z" fill="#1420c8" stroke="#0a1080"/><path d="M3.500 5.500 L9 11 L6.500 13.500 V3.500 L9 6 L3.500 11.500" stroke="#f01828" stroke-width="1.400" fill="none"/></svg>
<svg class="a" style="left:963px;top:7px" width="15" height="17" viewBox="0 0 15 17"><rect x="6" y="1" width="8" height="7" fill="#3a4688" stroke="#20285c"/><rect x="7.500" y="2.500" width="5" height="3.500" fill="#6878c0"/><rect x="7" y="9" width="6" height="2" fill="#b8bcc8"/><rect x="1" y="5" width="8" height="7" fill="#323e80" stroke="#20285c"/><rect x="2.500" y="6.500" width="5" height="4" fill="#5a6ab8"/><rect x="1" y="13" width="9" height="2.500" fill="#c8ccd8"/></svg>
<div class="t" style="left:986.500px;top:9px;font-size:11px">14:27</div>
</div></div>
</body></html>
